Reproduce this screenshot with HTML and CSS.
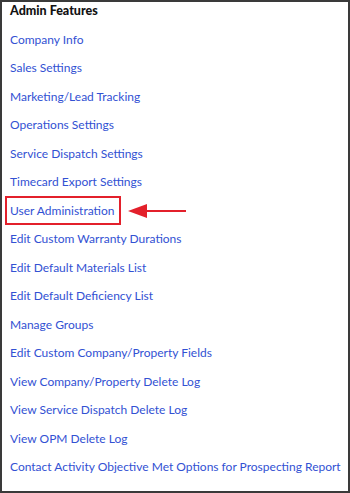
FILE: index.html
```html
<!DOCTYPE html>
<html lang="en">
<head>
    <meta charset="UTF-8">
    <title>Admin Features</title>
    <link rel="stylesheet" href="styles.css">
</head>
<body>
<div class="panel">
    <h3 class="title">Admin Features</h3>
    <ul class="links">
        <li><a href="#">Company Info</a></li>
        <li><a href="#">Sales Settings</a></li>
        <li><a href="#">Marketing/Lead Tracking</a></li>
        <li><a href="#">Operations Settings</a></li>
        <li><a href="#">Service Dispatch Settings</a></li>
        <li><a href="#">Timecard Export Settings</a></li>
        <li class="marked">
            <a href="#" class="highlight">User Administration</a>
            <svg class="arrow" width="58" height="16" viewBox="0 0 58 16">
                <path d="M0 8 L19 1 L19 15 Z" fill="#e3202b"/>
                <rect x="18" y="7" width="40" height="2" fill="#e3202b"/>
            </svg>
        </li>
        <li><a href="#">Edit Custom Warranty Durations</a></li>
        <li><a href="#">Edit Default Materials List</a></li>
        <li><a href="#">Edit Default Deficiency List</a></li>
        <li><a href="#">Manage Groups</a></li>
        <li><a href="#">Edit Custom Company/Property Fields</a></li>
        <li><a href="#">View Company/Property Delete Log</a></li>
        <li><a href="#">View Service Dispatch Delete Log</a></li>
        <li><a href="#">View OPM Delete Log</a></li>
        <li><a href="#">Contact Activity Objective Met Options for Prospecting Report</a></li>
    </ul>
</div>
</body>
</html>
```

FILE: styles.css
```css
html, body {
    margin: 0;
    height: 100%;
}
body {
    font-family: Lato, "Liberation Sans", sans-serif;
    font-size: 12px;
    background-color: white;
}
.panel {
    box-sizing: border-box;
    height: 493px;
    border: 2px solid #3a3a3a;
    padding: 1px 8px 0;
    display: flex;
    flex-direction: column;
    gap: 12.5px;
}
.title {
    margin: 0;
    font-size: 12.5px;
    line-height: 16px;
    font-weight: 900;
    color: #111;
}
.links {
    list-style: none;
    margin: 0;
    padding: 0;
    display: flex;
    flex-direction: column;
    gap: 12.5px;
}
.links li {
    line-height: 16px;
    white-space: nowrap;
}
.links a {
    color: #3251d3;
    text-decoration: none;
}
.marked {
    position: relative;
}
.highlight {
    display: inline-block;
    padding: 5px 5px 4px 3px;
    margin: -7px -7px -6px -5px;
    border: 2px solid #e3202b;
}
.arrow {
    position: absolute;
    left: 118px;
    top: 0;
}
```
